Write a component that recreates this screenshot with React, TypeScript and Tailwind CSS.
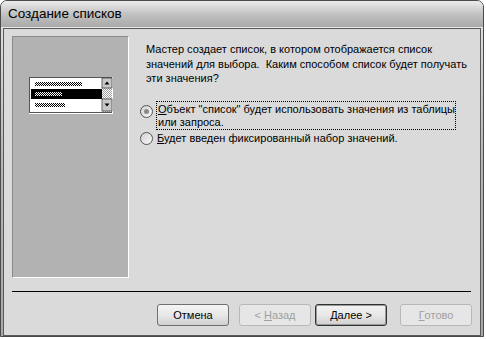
import React from 'react';

const font = { fontFamily: '"Liberation Sans", "Noto Sans", sans-serif' };

const ListPreview = () => (
  <svg width="84" height="37" viewBox="0 0 84 37">
    <defs>
      <pattern id="chk" width="2" height="2" patternUnits="userSpaceOnUse">
        <rect width="1" height="1" fill="#000" />
        <rect x="1" y="1" width="1" height="1" fill="#000" />
      </pattern>
      <pattern id="chkw" width="2" height="2" patternUnits="userSpaceOnUse">
        <rect width="1" height="1" fill="#fff" />
        <rect x="1" y="1" width="1" height="1" fill="#fff" />
      </pattern>
      <pattern id="chkg" width="2" height="2" patternUnits="userSpaceOnUse">
        <rect width="2" height="2" fill="#fff" />
        <rect width="1" height="1" fill="#a0a0a0" />
        <rect x="1" y="1" width="1" height="1" fill="#a0a0a0" />
      </pattern>
    </defs>
    <rect x="0" y="0" width="84" height="37" fill="#fff" />
    <rect x="0.5" y="0.5" width="82" height="35" fill="none" stroke="#555" />
    {/* rows */}
    <rect x="6" y="5" width="47" height="4" fill="url(#chk)" />
    <rect x="2" y="12" width="71" height="10" fill="#000" />
    <rect x="6" y="15" width="27" height="4" fill="url(#chkw)" />
    <rect x="6" y="26" width="30" height="4" fill="url(#chk)" />
    {/* scroll bar */}
    <rect x="73" y="1" width="10" height="34" fill="url(#chkg)" />
    <rect x="73" y="1" width="10" height="10" fill="#c8c8c8" stroke="#444" strokeWidth="0.8" />
    <path d="M75.5 7.5 L78 4.5 L80.5 7.5 Z" fill="#000" />
    <rect x="73" y="22" width="10" height="12" fill="#c8c8c8" stroke="#444" strokeWidth="0.8" />
    <path d="M75.5 26.5 L78 29.5 L80.5 26.5 Z" fill="#000" />
  </svg>
);

const Radio = ({ checked }: { checked?: boolean }) => (
  <span className="w-[13px] h-[13px] rounded-full border border-[#555] bg-gradient-to-br from-[#d0d0d0] to-[#fafafa] flex items-center justify-center shrink-0">
    {checked && <span className="w-[5px] h-[5px] rounded-full bg-[#8a8a8a]" />}
  </span>
);

const Btn = ({ children, disabled, def }: { children: React.ReactNode; disabled?: boolean; def?: boolean }) => (
  <div
    className={`w-[72px] h-[22px] rounded-[3px] flex items-center justify-center text-[11px] ${
      disabled
        ? 'border border-[#b8b8b8] bg-[#e6e6e6] text-[#a0a0a0]'
        : def
        ? 'border border-[#333] bg-gradient-to-b from-[#f4f4f4] via-[#e8e8e8] to-[#cfcfcf] text-black shadow-[inset_0_0_0_1px_#9a9a9a]'
        : 'border border-[#707070] bg-gradient-to-b from-[#f4f4f4] via-[#e8e8e8] to-[#cfcfcf] text-black'
    }`}
  >
    {children}
  </div>
);

export default function App() {
  return (
    <div className="w-[486px] h-[339px] bg-white" style={font}>
      <div className="w-[484px] h-[337px] flex flex-col rounded-t-[7px] border border-[#4a4a4a] bg-gradient-to-b from-[#e4e4e4] via-[#b4b4b4] to-[#a8a8a8] overflow-hidden">
        {/* title bar */}
        <div className="h-[27px] shrink-0 flex items-center pl-[7px] bg-gradient-to-b from-[#ececec] via-[#c2c2c2] to-[#a9a9a9] border-b border-[#e8e8e8]">
          <span className="text-[13.5px] text-black">Создание списков</span>
        </div>
        {/* client area */}
        <div className="flex-1 mx-[2px] mb-[2px] border border-[#5a5a5a] bg-[#dadada] flex flex-col px-[8px] pt-[7px] pb-[9px]">
          <div className="flex flex-1">
            <div className="w-[117px] h-[242px] shrink-0 bg-[#b2b2b2] border border-t-[#8a8a8a] border-l-[#8a8a8a] border-r-white border-b-white pt-[40px] pl-[16px]">
              <ListPreview />
            </div>
            <div className="flex-1 pl-[17px] pt-[6px] text-[11px] leading-[14.5px] text-black">
              <p className="whitespace-pre">
                Мастер создает список, в котором отображается список{'\n'}
                значений для выбора.  Каким способом список будет получать{'\n'}
                эти значения?
              </p>
              <div className="mt-[15px] flex items-start gap-[3px] -ml-[6px] leading-[13px]">
                <span className="mt-[4px]"><Radio checked /></span>
                <div className="border border-dotted border-black pl-[1px] pt-[1px] w-[300px]">
                  <span className="underline">О</span>бъект "список" будет использовать значения из таблицы
                  <br />
                  или запроса.
                </div>
              </div>
              <div className="mt-[2px] flex items-center gap-[4px] -ml-[6px] leading-[13px]">
                <Radio />
                <span>
                  <span className="underline">Б</span>удет введен фиксированный набор значений.
                </span>
              </div>
            </div>
          </div>
          <div className="h-px bg-black mt-[13px] mr-[1px]" />
          <div className="flex items-center mt-[12px] pl-[145px]">
            <Btn>Отмена</Btn>
            <div className="ml-[10px]">
              <Btn disabled>
                &lt;&nbsp;<span className="underline">Н</span>азад
              </Btn>
            </div>
            <div className="ml-[4px]">
              <Btn def>
                <span className="underline">Д</span>алее &gt;
              </Btn>
            </div>
            <div className="ml-[13px]">
              <Btn disabled>
                <span className="underline">Г</span>отово
              </Btn>
            </div>
          </div>
        </div>
      </div>
    </div>
  );
}
